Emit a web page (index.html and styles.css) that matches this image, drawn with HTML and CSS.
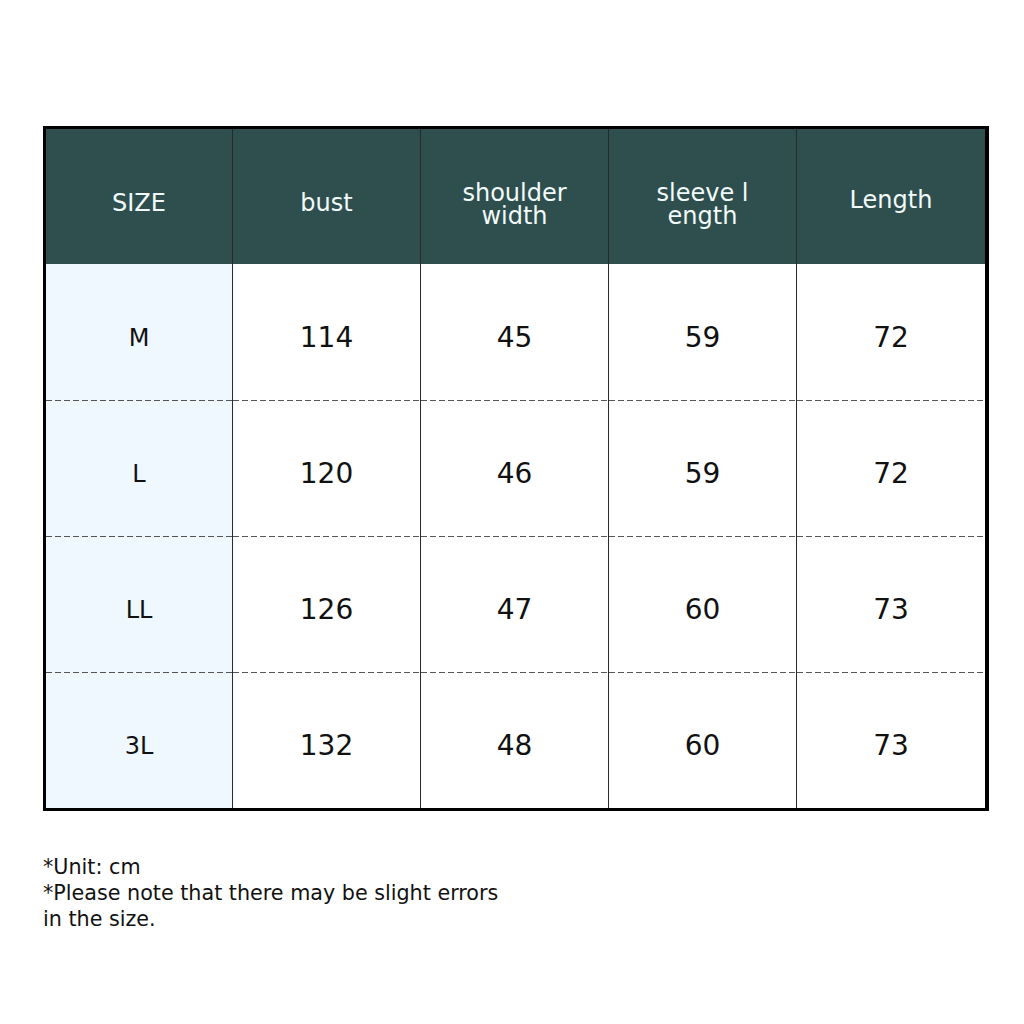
FILE: index.html
```html
<!DOCTYPE html>
<html>
<head>
<meta charset="utf-8">
<link rel="stylesheet" href="styles.css">
</head>
<body>
<div class="page">
  <div class="chart">
    <div class="row head">
      <div class="cell">SIZE</div>
      <div class="cell">bust</div>
      <div class="cell two">shoulder<br>width</div>
      <div class="cell two">sleeve l<br>ength</div>
      <div class="cell len">Length</div>
    </div>
    <div class="row body">
      <div class="cell size">M</div>
      <div class="cell">114</div>
      <div class="cell">45</div>
      <div class="cell">59</div>
      <div class="cell">72</div>
    </div>
    <div class="row body dashed">
      <div class="cell size">L</div>
      <div class="cell">120</div>
      <div class="cell">46</div>
      <div class="cell">59</div>
      <div class="cell">72</div>
    </div>
    <div class="row body dashed">
      <div class="cell size">LL</div>
      <div class="cell">126</div>
      <div class="cell">47</div>
      <div class="cell">60</div>
      <div class="cell">73</div>
    </div>
    <div class="row body dashed">
      <div class="cell size">3L</div>
      <div class="cell">132</div>
      <div class="cell">48</div>
      <div class="cell">60</div>
      <div class="cell">73</div>
    </div>
  </div>
  <div class="note">
    *Unit: cm<br>
    *Please note that there may be slight errors<br>
    in the size.
  </div>
</div>
</body>
</html>
```

FILE: styles.css
```css
html, body {
  margin: 0;
  padding: 0;
  background: #ffffff;
}

.page {
  padding: 126px 0 0 43px;
  font-family: "DejaVu Sans", Verdana, sans-serif;
}

.chart {
  width: 939px;
  border: 3px solid #000;
  border-right-width: 4px;
  border-bottom-width: 3px;
}

.row {
  display: grid;
  grid-template-columns: 186px 188px 188px 188px 189px;
}

.head {
  height: 135px;
  background: #2f4f4f;
  color: #f2fafa;
}

.body {
  height: 136px;
  color: #111;
}

.cell {
  box-sizing: border-box;
  display: flex;
  align-items: center;
  justify-content: center;
  text-align: center;
  border-left: 1px solid #2a2a2a;
  padding-top: 11px;
}

.cell:first-child {
  border-left: none;
}

.head .cell {
  font-size: 24px;
  line-height: 23px;
  padding-top: 14px;
}

.head .len {
  padding-top: 8px;
}

.head .two {
  padding-top: 17px;
}

.body .cell {
  font-size: 28px;
}

.body .size {
  font-size: 24px;
  background-color: #eff7ff;
}

.dashed .cell {
  background-image: linear-gradient(90deg, #555 6px, transparent 6px);
  background-size: 9px 1px;
  background-repeat: repeat-x;
  background-position: 0 0;
}

.note {
  margin-top: 43px;
  font-size: 20.7px;
  line-height: 26px;
  color: #111;
}
```
